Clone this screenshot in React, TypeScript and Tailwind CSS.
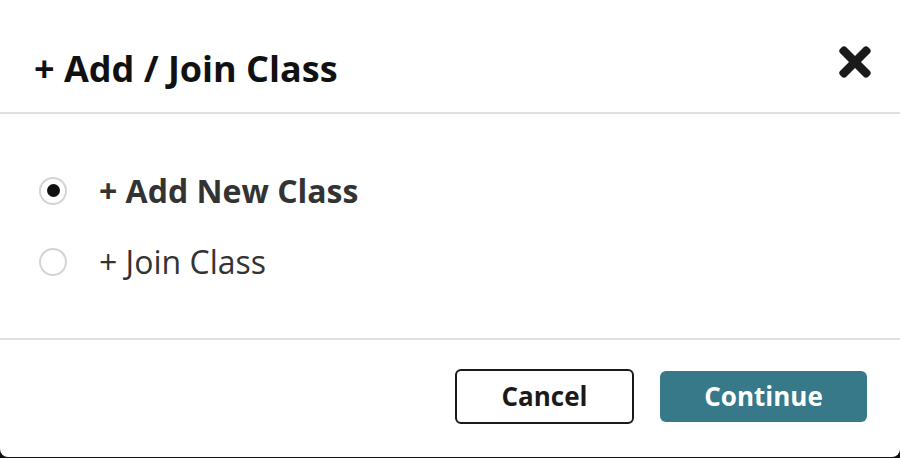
import { useState } from 'react';
import { FaTimes } from 'react-icons/fa';

type Mode = 'add' | 'join';

const OPTIONS: { id: Mode; label: string }[] = [
  { id: 'add', label: '+ Add New Class' },
  { id: 'join', label: '+ Join Class' },
];

function Radio({ checked }: { checked: boolean }) {
  return (
    <span className="flex h-[28px] w-[28px] shrink-0 items-center justify-center rounded-full border-2 border-[#d4d4d4] bg-white">
      {checked && <span className="h-[13px] w-[13px] rounded-full bg-[#111]" />}
    </span>
  );
}

export default function App() {
  const [mode, setMode] = useState<Mode>('add');

  return (
    <div className="h-[458px] w-[900px] bg-[#111]" style={{ fontFamily: '"Open Sans", sans-serif' }}>
      <div className="flex h-[457px] flex-col rounded-b-[8px] bg-white">
        {/* Header */}
        <div className="flex h-[114px] items-center justify-between border-b-2 border-[#e0e0e0] pl-[34px] pr-[22px] pt-[26px]">
          <h2 className="text-[36px] font-bold leading-[48px] text-[#111]">+ Add / Join Class</h2>
          <button className="mb-[14px] text-[#1a1a1a]">
            <FaTimes size={46} />
          </button>
        </div>

        {/* Options */}
        <div className="flex h-[226px] flex-col justify-center gap-[23px] border-b-2 border-[#e0e0e0] pl-[39px]">
          {OPTIONS.map((opt) => (
            <label
              key={opt.id}
              className="flex cursor-pointer items-center gap-[32px]"
              onClick={() => setMode(opt.id)}
            >
              <Radio checked={mode === opt.id} />
              <span
                className={`text-[32px] leading-[48px] text-[#333] ${mode === opt.id ? 'font-bold' : 'font-normal'}`}
              >
                {opt.label}
              </span>
            </label>
          ))}
        </div>

        {/* Footer */}
        <div className="flex flex-1 items-center justify-end gap-[26px] pb-[4px] pr-[33px]">
          <button className="h-[55px] w-[179px] rounded-[6px] border-2 border-[#1a1a1a] text-[26px] font-bold text-[#1a1a1a]">
            Cancel
          </button>
          <button className="h-[51px] w-[207px] rounded-[6px] bg-[#377989] text-[26px] font-bold text-white">
            Continue
          </button>
        </div>
      </div>
    </div>
  );
}
